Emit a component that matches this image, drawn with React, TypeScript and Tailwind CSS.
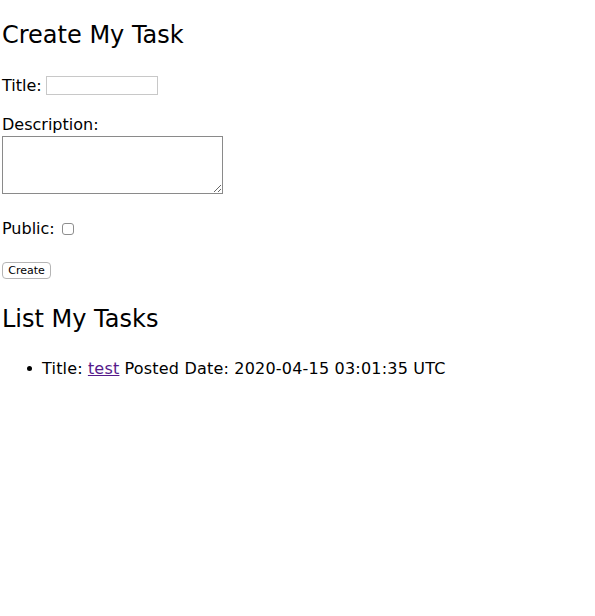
import React from "react";

export default function App() {
  const font = { fontFamily: '"DejaVu Sans", "Noto Sans CJK JP", sans-serif' };
  return (
    <div className="min-h-[616px] w-[595px] bg-white pl-[2px] text-black" style={font}>
      <h2 className="pt-[21px] text-[24px] leading-[28px] font-normal">Create My Task</h2>
      <div className="mt-[26px] flex h-[20px] items-center text-[16px] leading-[20px]">
        <label className="pt-[1px]">Title:</label>
        <input
          type="text"
          className="ml-[4px] h-[19px] w-[112px] border border-[#c8c8c8] bg-white outline-none"
        />
      </div>
      <div className="mt-[19px] h-[20px] pt-[1px] text-[16px] leading-[20px]">Description:</div>
      <textarea className="mt-[2px] block h-[58px] w-[221px] resize border border-[#8a8a8a] bg-white outline-none" />
      <div className="mt-[24px] flex h-[20px] items-center text-[16px] leading-[20px]">
        <label className="pt-[1px]">Public:</label>
        <span className="ml-[7px] mt-[2px] inline-block h-[12px] w-[12px] rounded-[3px] border border-[#8e8e8e] bg-white" />
      </div>
      <div className="mt-[24px]">
        <button className="flex h-[17px] w-[49px] items-center justify-center rounded-[4px] border border-[#b5b5b5] bg-white text-[11px] leading-[15px] text-black">
          Create
        </button>
      </div>
      <h2 className="mt-[25px] pt-[1px] text-[24px] leading-[28px] font-normal">List My Tasks</h2>
      <ul className="mt-[25px] pl-[25px]">
        <li className="flex h-[20px] items-center pt-[1px] text-[16px] leading-[20px] tracking-[0.2px]">
          <span className="inline-block h-[5px] w-[5px] rounded-full bg-black" />
          <span className="ml-[10px]">Title:</span>
          <a href="#" className="mx-[5px] text-[#551a8b] underline">test</a>
          <span>Posted Date: 2020-04-15 03:01:35 UTC</span>
        </li>
      </ul>
    </div>
  );
}
